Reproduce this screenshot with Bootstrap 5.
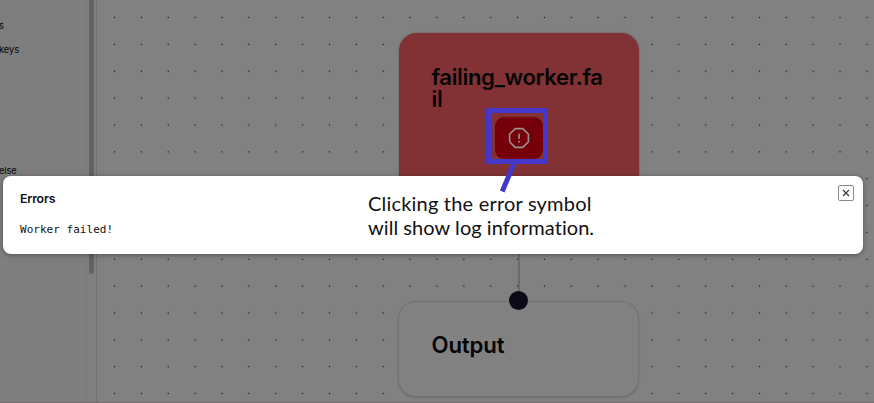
<!DOCTYPE html>
<html lang="en">
<head>
<meta charset="utf-8">
<meta name="viewport" content="width=device-width, initial-scale=1">
<title>Workflow errors</title>
<link rel="stylesheet" href="https://cdn.jsdelivr.net/npm/bootstrap@5.3.0/dist/css/bootstrap.min.css">
<style>
body{height:403px;background:#808080;font-family:Inter,"Liberation Sans",sans-serif;color:#050505}
.side-list{width:87px;background:#7e7e7e;border-right:1px solid #777;font-size:9.4px;letter-spacing:-.12px;line-height:12px;padding-top:20px}
.side-list .row-keys{margin-top:12px}
.side-list .row-else{margin-top:109px}
.side-list div{text-indent:-1px}
.scroll-track{width:10px;background:#808080;border-right:1px solid #6e6e6e;padding-left:2px}
.scroll-thumb{width:5px;height:274px;background:#626262;border-radius:0 0 3px 3px}
.flow-canvas{background:#818181}
.flow-node{position:absolute;border-radius:18px;font-weight:600;font-size:22.2px;line-height:22px}
.node-fail{left:302px;top:33px;width:240px;height:180px;background:#823234;padding:33px 32.5px;letter-spacing:-.4px;box-shadow:0 0 2px #555}
.node-output{left:301px;top:301px;width:241px;height:96px;background:#818181;border:1px solid #727272;padding:32px 32.5px;letter-spacing:-.15px;box-shadow:0 1px 2px #6c6c6c}
.error-btn{position:absolute;left:96px;top:84px;width:48px;height:42px;background:#76000a;border-radius:9px}
.edge-line{position:absolute;left:421px;top:210px;width:2px;height:90px;background:#6a6a6a}
.edge-port{position:absolute;left:412px;top:291px;width:19px;height:19px;background:#0d0a17}
.log-dialog{position:absolute;left:3px;top:176px;width:860px;height:78px;border-radius:8px;background:#fff;padding:15px 9px 0 17px;box-shadow:0 1px 5px rgba(0,0,0,.35)}
.log-title{font-size:12.3px;font-weight:600;letter-spacing:-.15px;line-height:16px;color:#111}
.log-text{font-family:"DejaVu Sans Mono","Liberation Mono",monospace;font-size:11px;letter-spacing:.03px;line-height:15px;margin-top:15px;color:#111}
.log-close{width:16px;height:16px;border:1px solid #888;border-radius:2px;margin-top:-6px}
.note-text{position:absolute;left:368px;top:191px;font-family:Lato,"Open Sans",sans-serif;font-size:20px;line-height:24px;color:#111;white-space:nowrap;font-variant-ligatures:none}
.note-a{letter-spacing:.2px}
.note-b{letter-spacing:.06px}
.note-mark{position:absolute;left:0;top:0;pointer-events:none}
.window-edge{position:absolute;left:0;bottom:0;width:100%;height:1px;background:#777073}
</style>
<script src="https://cdn.jsdelivr.net/npm/bootstrap@5.3.0/dist/js/bootstrap.bundle.min.js"></script>
</head>
<body class="position-relative overflow-hidden">
<div class="d-flex h-100">
  <aside class="side-list flex-shrink-0 text-nowrap">
    <div>s</div>
    <div class="row-keys">keys</div>
    <div class="row-else">else</div>
  </aside>
  <div class="scroll-track flex-shrink-0"><div class="scroll-thumb"></div></div>
  <main class="flow-canvas position-relative flex-grow-1 overflow-hidden">
    <svg class="d-block w-100 h-100" aria-hidden="true">
      <defs><pattern id="dots" x="4.1" y="4.1" width="26.87" height="26.86" patternUnits="userSpaceOnUse"><circle cx="13.43" cy="13.43" r=".68" fill="#111"/></pattern></defs>
      <rect width="100%" height="100%" fill="url(#dots)"/>
    </svg>
    <div class="edge-line"></div>
    <section class="flow-node node-fail">failing_worker.fa<br>il
      <div class="error-btn d-flex align-items-center justify-content-center">
        <svg width="22" height="22" viewBox="0 0 22 22" fill="none" stroke="#989292" stroke-width="1.6"><path d="M7.2 1.6h7.6l5.6 5.6v7.6l-5.6 5.6H7.2l-5.6-5.6V7.2z" stroke-linejoin="round"/><path d="M11 6.7v5.2M11 13.8v1.7"/></svg>
      </div>
    </section>
    <section class="flow-node node-output">Output</section>
    <div class="edge-port rounded-circle"></div>
  </main>
</div>
<div class="window-edge"></div>
<div class="log-dialog d-flex justify-content-between align-items-start" role="dialog" aria-label="Errors">
  <div><div class="log-title">Errors</div><div class="log-text">Worker failed!</div></div>
  <div class="log-close d-flex align-items-center justify-content-center" role="button" aria-label="Close">
    <svg width="8" height="8" viewBox="0 0 8 8" stroke="#333" stroke-width="1.1"><path d="M1 1l6 6M7 1L1 7"/></svg>
  </div>
</div>
<svg class="note-mark" width="874" height="403" fill="none" stroke="#4338ca" stroke-width="5" aria-hidden="true"><path d="M488.5 110.5h57v51h-57zM515.5 160L502.2 191.5"/></svg>
<div class="note-text"><span class="note-a">Clicking the error symbol</span><br><span class="note-b">will show log information.</span></div>
</body>
</html>
